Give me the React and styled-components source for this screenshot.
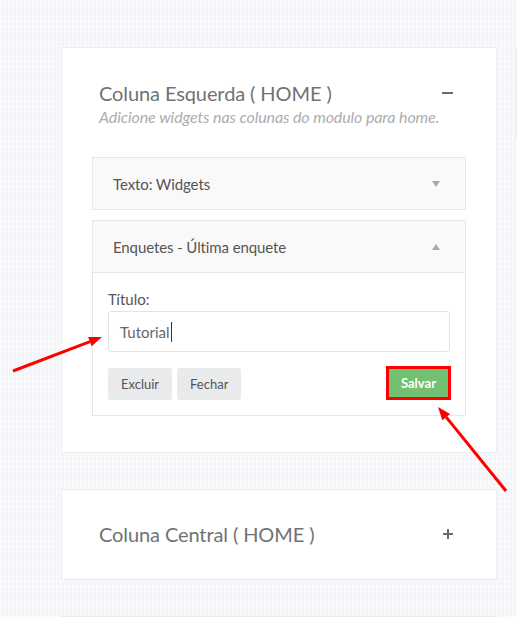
import React from 'react';
import styled, { createGlobalStyle } from 'styled-components';

const GlobalStyle = createGlobalStyle`
  html, body {
    margin: 0;
    padding: 0;
  }
  body {
    font-family: Lato, "Open Sans", sans-serif;
    background-color: #f3f5f8;
    background-image:
      repeating-linear-gradient(90deg, rgba(255,255,255,0.6) 0 1px, transparent 1px 4px),
      repeating-linear-gradient(0deg, rgba(255,255,255,0.4) 0 1px, transparent 1px 5px);
    overflow: hidden;
  }
`;

function App() {
  return (
    <Page>
      <GlobalStyle />
      <Columns>
        <Stack>
          <Card>
            <CardHeader>
              <div>
                <CardTitle>Coluna Esquerda ( HOME )</CardTitle>
                <CardSub>Adicione widgets nas colunas do modulo para home.</CardSub>
              </div>
              <Toggle>
                <svg width="11" height="2" viewBox="0 0 11 2">
                  <rect width="11" height="2" fill="#6a6d70" />
                </svg>
              </Toggle>
            </CardHeader>

            <Widget>
              <WidgetHead>
                <span>Texto: Widgets</span>
                <Caret $up={false} />
              </WidgetHead>
            </Widget>

            <Widget>
              <WidgetHead $open>
                <span>Enquetes - Última enquete</span>
                <Caret $up />
              </WidgetHead>
              <WidgetBody>
                <Label>Título:</Label>
                <Input>
                  Tutorial<Cursor />
                </Input>
                <Actions>
                  <Btn>Excluir</Btn>
                  <Btn>Fechar</Btn>
                  <Spacer />
                  <Btn $primary $highlight>Salvar</Btn>
                </Actions>
              </WidgetBody>
            </Widget>
          </Card>

          <Card $collapsed>
            <CardHeader $collapsed>
              <CardTitle>Coluna Central ( HOME )</CardTitle>
              <Toggle $plus>
                <svg width="10" height="10" viewBox="0 0 10 10">
                  <rect x="0" y="4" width="10" height="2" fill="#6a6d70" />
                  <rect x="4" y="0" width="2" height="10" fill="#6a6d70" />
                </svg>
              </Toggle>
            </CardHeader>
          </Card>

          <Card $collapsed />
        </Stack>
        <SideCard />
      </Columns>

      <Arrows width="517" height="617" viewBox="0 0 517 617">
        <line x1="13" y1="371" x2="90" y2="341.6" stroke="#ff0000" strokeWidth="3" />
        <polygon points="102,337 91.6,346.3 88.1,337" fill="#ff0000" />
        <line x1="506" y1="491" x2="446.2" y2="417.1" stroke="#ff0000" strokeWidth="3" />
        <polygon points="438,407 450.1,414 442.3,420.2" fill="#ff0000" />
      </Arrows>
    </Page>
  );
}

export default App;

const Page = styled.div`
  position: relative;
  width: 517px;
  height: 617px;
  overflow: hidden;
`;

const Columns = styled.div`
  display: grid;
  grid-template-columns: 436px 200px;
  gap: 19px;
  padding: 47px 0 0 61px;
  align-items: start;
`;

const Stack = styled.div`
  display: flex;
  flex-direction: column;
  gap: 36px;
`;

const Card = styled.div`
  background: #fff;
  border: 1px solid #ebedef;
  box-sizing: border-box;
  padding: ${p => (p.$collapsed ? '0 30px' : '32px 30px 36px')};
  min-height: ${p => (p.$collapsed ? '91px' : 'auto')};
`;

const SideCard = styled.div`
  background: #fff;
  border: 1px solid #ebedef;
  height: 91px;
`;

const CardHeader = styled.div`
  display: flex;
  justify-content: space-between;
  align-items: center;
  align-items: ${p => (p.$collapsed ? 'center' : 'flex-start')};
  padding: 0 13px 0 7px;
  height: ${p => (p.$collapsed ? '87px' : 'auto')};
  margin-bottom: ${p => (p.$collapsed ? '0' : '29px')};
`;

const CardTitle = styled.h2`
  margin: 0;
  font-size: 20px;
  letter-spacing: -0.1px;
  font-weight: 400;
  color: #707275;
  line-height: 26px;
`;

const CardSub = styled.p`
  margin: 0;
  font-size: 16px;
  letter-spacing: -0.1px;
  font-style: italic;
  color: #abadaf;
  line-height: 22px;
`;

const Toggle = styled.div`
  display: flex;
  align-items: center;
  height: 26px;
`;

const Widget = styled.div`
  border: 1px solid #e6e7e8;
  background: #fff;
  & + & {
    margin-top: 10px;
  }
`;

const WidgetHead = styled.div`
  display: flex;
  justify-content: space-between;
  align-items: center;
  height: 51px;
  padding: 0 25px 0 20px;
  background: #f9f9f9;
  font-size: 15px;
  letter-spacing: -0.1px;
  color: #555;
  border-bottom: ${p => (p.$open ? '1px solid #e6e7e8' : 'none')};
`;

const Caret = styled.span`
  width: 0;
  height: 0;
  border-left: 4px solid transparent;
  border-right: 4px solid transparent;
  ${p => (p.$up ? 'border-bottom: 6px solid #a5a7a9;' : 'border-top: 6px solid #a5a7a9;')}
`;

const WidgetBody = styled.div`
  padding: 15px 15px 15px;
`;

const Label = styled.div`
  font-size: 15px;
  color: #555;
  line-height: 22px;
  margin-bottom: 1px;
`;

const Input = styled.div`
  display: flex;
  align-items: center;
  height: 41px;
  box-sizing: border-box;
  border: 1px solid #e2e3e5;
  border-radius: 3px;
  padding: 0 11px;
  font-size: 15px;
  color: #666;
`;

const Cursor = styled.span`
  display: inline-block;
  width: 1px;
  height: 20px;
  background: #333;
  margin-left: 1px;
`;

const Actions = styled.div`
  display: flex;
  align-items: flex-end;
  gap: 5px;
  margin-top: 14px;
`;

const Spacer = styled.div`
  flex: 1;
`;

const Btn = styled.button`
  font-family: Lato, sans-serif;
  font-size: 13px;
  height: ${p => (p.$highlight ? '34px' : '32px')};
  padding: 0 ${p => (p.$highlight ? '12px' : '13px')};
  border: ${p => (p.$highlight ? '3px solid #ff0000' : 'none')};
  background: ${p => (p.$primary ? '#72c172' : '#e9eaec')};
  color: ${p => (p.$primary ? '#fff' : '#555')};
  font-weight: ${p => (p.$primary ? 700 : 400)};
  border-radius: ${p => (p.$highlight ? '0' : '3px')};
  margin-right: ${p => (p.$highlight ? '-1px' : '0')};
`;

const Arrows = styled.svg`
  position: absolute;
  left: 0;
  top: 0;
  pointer-events: none;
`;
